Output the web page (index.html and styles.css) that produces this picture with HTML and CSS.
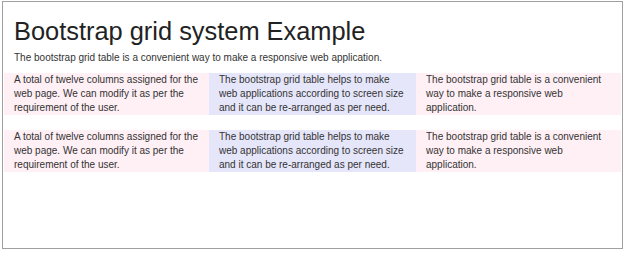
FILE: index.html
```html
<!DOCTYPE html>
<html lang="en">
<head>
    <meta charset="UTF-8">
    <title>Bootstrap grid system Example</title>
    <link rel="stylesheet" href="styles.css">
</head>
<body>
    <div class="frame">
        <div class="intro">
            <h1>Bootstrap grid system Example</h1>
            <p>The bootstrap grid table is a convenient way to make a responsive web application.</p>
        </div>
        <div class="row">
            <div class="col blush">A total of twelve columns assigned for the web page. We can modify it as per the requirement of the user.</div>
            <div class="col lavender">The bootstrap grid table helps to make web applications according to screen size and it can be re-arranged as per need.</div>
            <div class="col blush">The bootstrap grid table is a convenient way to make a responsive web application.</div>
        </div>
        <div class="row">
            <div class="col blush">A total of twelve columns assigned for the web page. We can modify it as per the requirement of the user.</div>
            <div class="col lavender">The bootstrap grid table helps to make web applications according to screen size and it can be re-arranged as per need.</div>
            <div class="col blush">The bootstrap grid table is a convenient way to make a responsive web application.</div>
        </div>
    </div>
</body>
</html>
```

FILE: styles.css
```css
body {
    margin: 0;
    padding: 1px 3px 0 2px;
    font-family: "Liberation Sans", Arial, sans-serif;
    font-size: 10px;
    line-height: 14px;
    color: #333;
    background: #fff;
}

.frame {
    box-sizing: border-box;
    border: 1px solid #a0a0a0;
    height: 248px;
    padding: 0 1px;
}

.intro {
    padding: 0 10px;
}

h1 {
    margin: 14px 0 5px;
    font-size: 25.4px;
    line-height: 30px;
    font-weight: 400;
    color: #222;
}

p {
    margin: 0 0 8px;
}

.row {
    display: grid;
    grid-template-columns: 205px 207px 1fr;
    margin-bottom: 15px;
}

.col {
    padding: 0 10px;
}

.blush {
    background: #fff0f5;
}

.lavender {
    background: #e6e6fa;
}
```
